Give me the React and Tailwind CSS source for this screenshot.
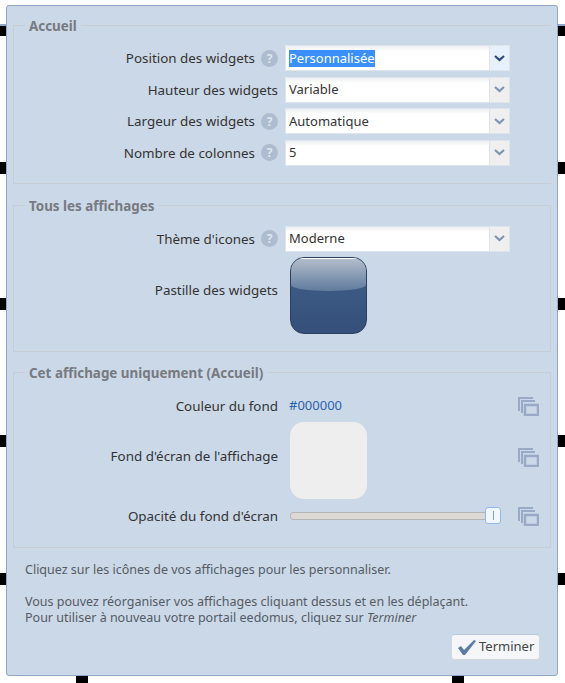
const font = "font-['Noto_Sans',sans-serif]";

const QuestionMark = () => (
  <span className="w-[17px] h-[17px] rounded-full bg-[#aebccf] text-[#dfe6ef] text-[12px] font-bold leading-[17px] text-center shrink-0">?</span>
);

const CopyIcon = ({ className = '' }) => (
  <svg width="21" height="19" viewBox="0 0 21 19" fill="none" stroke="#9aaac6" strokeWidth="2" className={`shrink-0 ${className}`}>
    <path d="M15 1H1v13" />
    <path d="M17 4H4v12" />
    <rect x="7" y="8" width="13" height="10" strokeWidth="2.5" />
  </svg>
);

const Handle = ({ className }) => <div className={`absolute w-3 h-3 bg-black ${className}`} />;

const SelectRow = ({ label, value, help, active, selected }) => (
  <div className="flex items-center h-[31.5px]">
    <div className="w-[270px] flex justify-end items-center gap-[6px] pr-[6px] shrink-0 text-[13.4px]">
      <span>{label}</span>
      {help && <QuestionMark />}
    </div>
    <div className="ml-[1px] w-[225px] h-[26px] flex bg-white border border-[#dfe5ed] bg-gradient-to-b from-[#eceff2] via-white to-white bg-[length:100%_10px] bg-no-repeat">
      <div className="flex-1 pl-[3px] flex items-center">
        <span className={selected ? 'bg-[#3a8ffb] text-white leading-[17px]' : ''}>{value}</span>
      </div>
      <div className={`w-[20px] flex items-center justify-center border-l border-[#dfe3e8] ${active ? 'bg-[#e6f1fc]' : 'bg-[#efefef]'}`}>
        <svg width="11" height="7" viewBox="0 0 11 7" fill="none" stroke={active ? '#2d4a7c' : '#7f93b5'} strokeWidth="2.2">
          <path d="M1 1l4.5 4L10 1" />
        </svg>
      </div>
    </div>
  </div>
);

const Section = ({ title, className, children }) => (
  <fieldset className={`border border-[#c8cdd3] ml-[6px] mr-[6px] ${className}`}>
    <legend className="ml-[11px] px-[4px] pt-[2px] text-[13.4px] leading-[16px] font-bold text-[#777a80]">{title}</legend>
    {children}
  </fieldset>
);

const Row = ({ label, labelClass = '', height, contentClass = '', children }) => (
  <div className="flex items-center" style={{ height }}>
    <div className={`w-[270px] text-right pr-[6px] shrink-0 text-[13.4px] ${labelClass}`}>{label}</div>
    <div className={`flex-1 flex items-center justify-between pr-[11px] ${contentClass}`}>{children}</div>
  </div>
);

export default function App() {
  return (
    <div className={`relative w-[565px] h-[683px] bg-white overflow-hidden text-[13px] text-[#333] ${font}`}>
      <Handle className="left-[-6px] top-[24px] border-t-2 border-t-[#8fa6c6]" />
      <Handle className="left-[-6px] top-[162px]" />
      <Handle className="left-[-6px] top-[298px]" />
      <Handle className="left-[-6px] top-[435px]" />
      <Handle className="left-[-6px] top-[573px]" />
      <Handle className="right-[-4px] top-[24px] border-t-2 border-t-[#8fa6c6]" />
      <Handle className="right-[-4px] top-[162px]" />
      <Handle className="right-[-4px] top-[298px]" />
      <Handle className="right-[-4px] top-[435px]" />
      <Handle className="right-[-4px] top-[573px]" />
      <Handle className="left-[76px] bottom-[-5px]" />
      <Handle className="left-[452px] bottom-[-5px]" />

      <div className="absolute left-[6px] top-[5px] w-[552px] h-[671px] bg-[#cbd8e8] border border-[#8fa6c6] rounded-[3px] pt-[10px]">
        <Section title="Accueil" className="h-[168px] pt-[8.5px] border-r-0">
          <SelectRow label="Position des widgets" value="Personnalisée" help active selected />
          <SelectRow label="Hauteur des widgets" value="Variable" />
          <SelectRow label="Largeur des widgets" value="Automatique" help />
          <SelectRow label="Nombre de colonnes" value="5" help />
        </Section>

        <Section title="Tous les affichages" className="h-[156px] mt-[12px] pt-[9px]">
          <SelectRow label="Thème d'icones" value="Moderne" help />
          <Row label="Pastille des widgets" labelClass="pb-[6px]" height="77px" contentClass="pl-[6px] mt-[4px]">
            <div className="relative w-[77px] h-[77px] rounded-[14px] border border-[#2c3f5e] bg-gradient-to-b from-[#3f6088] to-[#35507a] overflow-hidden">
              <div className="absolute inset-x-0 top-0 h-[33px] rounded-b-[50%_6px] bg-gradient-to-b from-[#b3bdca] to-[#5f7b9d] border-t border-white" />
            </div>
          </Row>
        </Section>

        <Section title="Cet affichage uniquement (Accueil)" className="h-[185px] mt-[11px] pt-[9px]">
          <Row label="Couleur du fond" height="32px" contentClass="pl-[5px]">
            <span className="text-[#2b62ad]">#000000</span>
            <CopyIcon />
          </Row>
          <Row label="Fond d'écran de l'affichage" labelClass="pb-[8px]" height="77px" contentClass="pl-[6px]">
            <div className="w-[77px] h-[77px] rounded-[14px] bg-[#eeeeee]" />
            <CopyIcon className="mb-[6px]" />
          </Row>
          <Row label="Opacité du fond d'écran" labelClass="pt-[1px]" height="34px" contentClass="pl-[6px]">
            <div className="relative w-[204px] h-[8px] bg-[#dcd8d3] border border-[#b5b5b5] rounded-[3px]">
              <div className="absolute right-[-8px] top-[-6px] w-[16px] h-[17px] bg-[#f2f7fe] border border-[#8fb8ee] rounded-[3px] flex items-center justify-center">
                <div className="w-[1px] h-[9px] bg-[#7f9fcb]" />
              </div>
            </div>
            <CopyIcon />
          </Row>
        </Section>

        <div className="mt-[14px] ml-[18px] text-[#555b63] text-[12.5px] leading-[16px]">
          <p>Cliquez sur les icônes de vos affichages pour les personnaliser.</p>
          <p className="mt-[16px]">Vous pouvez réorganiser vos affichages cliquant dessus et en les déplaçant.</p>
          <p>Pour utiliser à nouveau votre portail eedomus, cliquez sur <em>Terminer</em></p>
        </div>

        <div className="absolute right-[17px] bottom-[15px] w-[89px] h-[26px] flex items-center gap-[2px] pl-[5px] bg-[#f4f6f9] border border-[#d5d9de] border-t-[#b9c8de] rounded-[4px] text-[#444]">
          <svg width="20" height="17" viewBox="0 0 20 17">
            <path d="M1 9l3-2 3 4L17 1l2 1L8 16h-2z" fill="#5c7ba6" />
          </svg>
          <span>Terminer</span>
        </div>
      </div>
    </div>
  );
}
